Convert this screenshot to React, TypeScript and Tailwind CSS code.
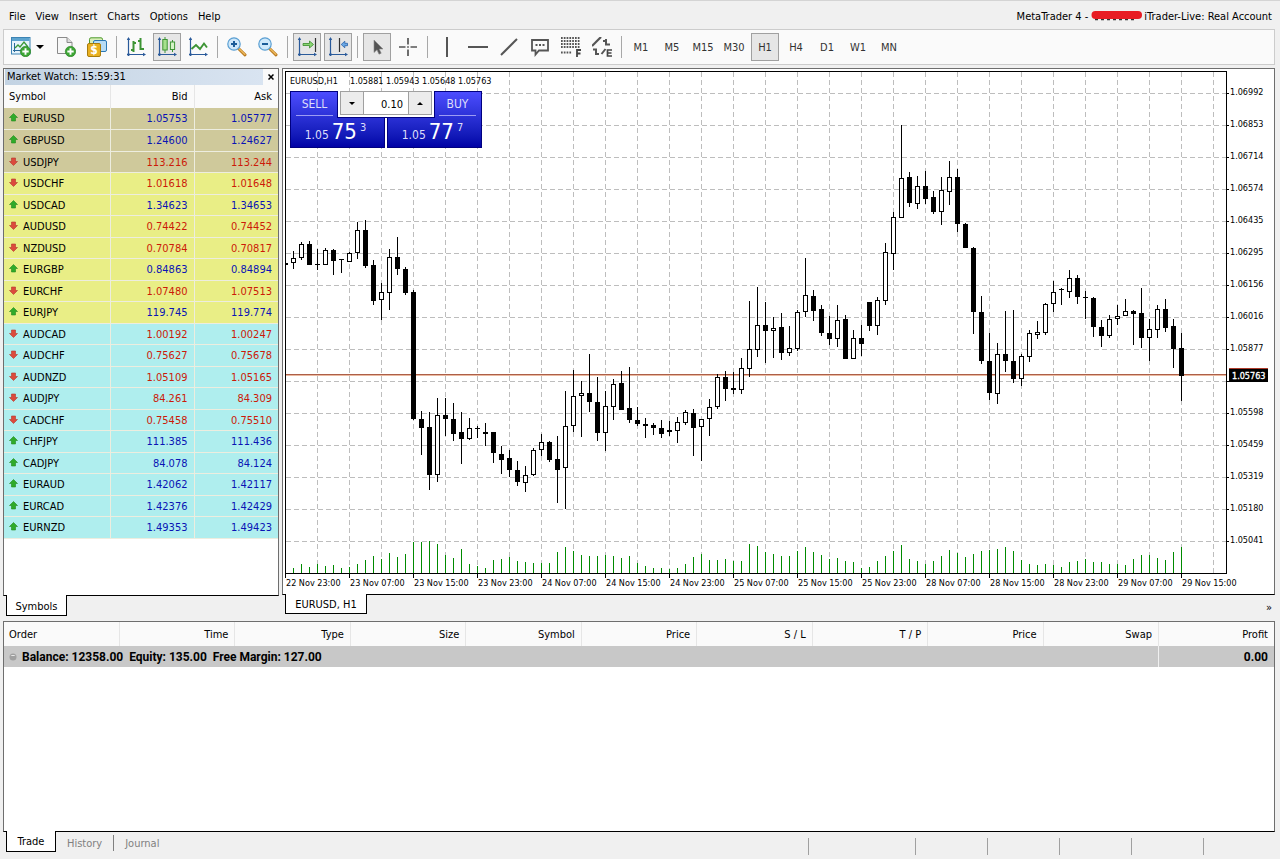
import React from "react";

const quotes: [string, boolean, string, string][] = [
  ["EURUSD", true, "1.05753", "1.05777"],
  ["GBPUSD", true, "1.24600", "1.24627"],
  ["USDJPY", false, "113.216", "113.244"],
  ["USDCHF", false, "1.01618", "1.01648"],
  ["USDCAD", true, "1.34623", "1.34653"],
  ["AUDUSD", false, "0.74422", "0.74452"],
  ["NZDUSD", false, "0.70784", "0.70817"],
  ["EURGBP", true, "0.84863", "0.84894"],
  ["EURCHF", false, "1.07480", "1.07513"],
  ["EURJPY", true, "119.745", "119.774"],
  ["AUDCAD", false, "1.00192", "1.00247"],
  ["AUDCHF", false, "0.75627", "0.75678"],
  ["AUDNZD", false, "1.05109", "1.05165"],
  ["AUDJPY", false, "84.261", "84.309"],
  ["CADCHF", false, "0.75458", "0.75510"],
  ["CHFJPY", true, "111.385", "111.436"],
  ["CADJPY", true, "84.078", "84.124"],
  ["EURAUD", true, "1.42062", "1.42117"],
  ["EURCAD", true, "1.42376", "1.42429"],
  ["EURNZD", true, "1.49353", "1.49423"],
];

// Candles: high, body top, body bottom, low, 1 = falling (filled); 8px apart.
const candles: number[][] = [
  [251, 258, 263, 269, 0], [242, 244, 258, 260, 0], [241, 244, 265, 265, 1], [249, 264, 265, 270, 1],
  [248, 250, 265, 265, 0], [249, 250, 261, 275, 1], [259, 259, 260, 273, 1], [252, 253, 262, 262, 0],
  [222, 230, 253, 259, 0], [220, 230, 266, 268, 1], [260, 265, 301, 305, 1], [283, 292, 300, 320, 0],
  [249, 257, 293, 310, 0], [237, 257, 269, 275, 1], [267, 269, 293, 295, 1], [290, 292, 419, 420, 1],
  [411, 419, 428, 455, 1], [412, 427, 475, 490, 1], [398, 415, 475, 482, 0], [398, 415, 419, 436, 1],
  [403, 419, 434, 441, 1], [412, 432, 439, 464, 1], [418, 428, 439, 440, 0], [426, 428, 429, 438, 1],
  [423, 432, 434, 446, 1], [432, 432, 453, 463, 1], [446, 454, 460, 474, 1], [450, 458, 470, 477, 1],
  [461, 470, 482, 486, 1], [466, 475, 483, 492, 0], [448, 450, 475, 476, 0], [434, 442, 450, 456, 0],
  [441, 442, 460, 462, 1], [436, 459, 470, 503, 1], [391, 426, 468, 509, 0], [370, 396, 426, 432, 0],
  [381, 393, 396, 437, 0], [354, 393, 402, 412, 1], [377, 402, 433, 441, 1], [391, 406, 433, 451, 0],
  [379, 384, 407, 420, 0], [371, 383, 410, 410, 1], [367, 408, 420, 423, 1], [407, 420, 424, 426, 1],
  [418, 424, 426, 438, 1], [423, 425, 428, 435, 1], [420, 428, 434, 438, 1], [421, 430, 432, 436, 1],
  [417, 422, 431, 443, 0], [410, 412, 423, 425, 0], [409, 413, 428, 456, 1], [419, 419, 427, 461, 0],
  [399, 407, 419, 436, 0], [374, 377, 407, 409, 0], [371, 377, 389, 401, 1], [372, 388, 390, 394, 1],
  [358, 368, 390, 394, 0], [301, 349, 369, 377, 0], [287, 325, 350, 357, 0], [302, 325, 331, 363, 1],
  [317, 328, 331, 358, 0], [313, 327, 353, 360, 1], [326, 348, 353, 356, 0], [310, 312, 349, 351, 0],
  [258, 295, 312, 317, 0], [290, 296, 311, 321, 1], [305, 309, 333, 336, 1], [316, 333, 339, 345, 1],
  [305, 320, 339, 347, 0], [315, 319, 359, 359, 1], [330, 338, 359, 359, 0], [325, 338, 344, 356, 1],
  [302, 302, 326, 331, 1], [297, 300, 326, 335, 0], [243, 252, 301, 305, 0], [212, 217, 254, 270, 0],
  [125, 178, 218, 218, 0], [172, 177, 203, 207, 1], [176, 186, 204, 209, 0], [171, 186, 199, 204, 1],
  [191, 197, 212, 214, 1], [177, 190, 212, 225, 0], [161, 177, 192, 205, 0], [169, 177, 224, 232, 1],
  [223, 224, 248, 248, 1], [247, 248, 312, 334, 1], [296, 312, 361, 364, 1], [333, 361, 393, 400, 1],
  [343, 354, 394, 404, 0], [311, 354, 361, 372, 1], [310, 361, 379, 383, 1], [354, 356, 379, 386, 0],
  [330, 333, 357, 362, 0], [321, 332, 335, 339, 0], [303, 304, 333, 335, 0], [281, 292, 304, 312, 0],
  [288, 289, 290, 305, 1], [270, 278, 292, 298, 0], [275, 278, 297, 304, 1], [291, 297, 298, 319, 1],
  [297, 298, 327, 337, 1], [320, 327, 336, 347, 1], [315, 319, 336, 338, 0], [305, 316, 319, 325, 0],
  [299, 311, 316, 316, 0], [310, 311, 314, 345, 1], [288, 313, 338, 348, 1], [319, 329, 338, 361, 0],
  [305, 309, 330, 338, 0], [299, 309, 328, 332, 1], [319, 326, 349, 368, 1], [333, 348, 376, 401, 1],
];

const volumes: number[] = [
  5, 9, 6, 9, 7, 8, 5, 6, 9, 13, 17, 14, 20, 16, 19, 31, 31, 32, 29, 18, 15, 24, 9, 7, 5, 13, 14, 16, 12, 11,
  10, 10, 10, 21, 26, 22, 18, 17, 17, 18, 17, 15, 17, 10, 7, 5, 5, 4, 5, 9, 16, 19, 13, 13, 14, 12, 12, 29, 27,
  21, 19, 17, 17, 22, 26, 21, 18, 14, 15, 12, 11, 5, 6, 12, 17, 22, 28, 14, 12, 9, 12, 17, 23, 20, 16, 19, 22,
  23, 24, 26, 22, 13, 9, 8, 9, 8, 6, 11, 12, 14, 11, 11, 9, 9, 8, 14, 18, 18, 15, 13, 21, 26,
];

const prices = [
  "1.06992", "1.06853", "1.06714", "1.06574", "1.06435", "1.06295", "1.06156", "1.06016", "1.05877", "",
  "1.05598", "1.05459", "1.05319", "1.05180", "1.05041",
];
const times = [
  "22 Nov 23:00", "23 Nov 07:00", "23 Nov 15:00", "23 Nov 23:00", "24 Nov 07:00", "24 Nov 15:00", "24 Nov 23:00",
  "25 Nov 07:00", "25 Nov 15:00", "25 Nov 23:00", "28 Nov 07:00", "28 Nov 15:00", "28 Nov 23:00", "29 Nov 07:00",
  "29 Nov 15:00",
];

function Chart() {
  return (
    <svg
      viewBox="283 69 991 525"
      className="block w-full text-[9px]"
      role="img"
      aria-label="EURUSD H1 candlestick chart"
      shapeRendering="crispEdges"
    >
      <g stroke="#bdbdbd" strokeDasharray="5 3">
        {prices.map((_, i) => (
          <line key={i} x1={286} x2={1226} y1={93.5 + i * 32} y2={93.5 + i * 32} />
        ))}
        {Array.from({ length: 29 }, (_, i) => (
          <line key={i} y1={72} y2={573} x1={317.5 + i * 32} x2={317.5 + i * 32} />
        ))}
      </g>
      <rect x={286} y={374} width={940} height={1} fill="#ad5f48" />
      <rect x={286} y={375} width={940} height={1} fill="#e9b9a0" />
      {volumes.map((v, i) => (
        <rect key={i} x={293 + i * 8} y={573 - v} width={1} height={v} fill="#008a00" />
      ))}
      <rect x={286} y={263} width={2} height={2} />
      {candles.map(([h, t, b, l, down], i) => {
        const x = 293 + i * 8;
        return (
          <g key={i}>
            <rect x={x} y={h} width={1} height={l - h} />
            <rect x={x - 2} y={t} width={5} height={b - t} />
            {!down && <rect x={x - 1} y={t + 1} width={3} height={b - t - 2} fill="#fff" />}
          </g>
        );
      })}
      <path d="M285.5 577V71.500H1226.500V573.500H285.500" fill="none" stroke="#000" />
      {prices.map((p, i) => (
        <g key={i}>
          <rect x={1226} y={93 + i * 32} width={3} height={1} />
          <text x={1230} y={95 + i * 32}>{p}</text>
        </g>
      ))}
      {times.map((t, i) => (
        <g key={t}>
          <rect x={285 + i * 64} y={573} width={1} height={5} />
          <text x={286 + i * 64} y={586}>{t}</text>
        </g>
      ))}
      <rect x={1229} y={368} width={39} height={14} />
      <rect x={1229} y={368} width={39} height={1} fill="#ad3a2a" />
      <text x={1232} y={379} fill="#fff" stroke="#fff" strokeWidth={0.3}>1.05763</text>
      <text x={290} y={84}>EURUSD,H1</text>
      {["1.05881", "1.05943", "1.05648", "1.05763"].map((p, i) => (
        <text key={p} x={350 + i * 36} y={84}>{p}</text>
      ))}
    </svg>
  );
}

function Deal({ side, big, sup }: { side: string; big: string; sup: string }) {
  const buy = side === "BUY";
  return (
    <button className="flex h-[57px] w-[95px] flex-col border border-[#000080] bg-linear-to-b from-[#4c4cff] to-[#0202a6] text-[#dedefa]">
      <span className={buy ? "ml-auto w-[47px] px-[5px]" : "w-[47px] px-[5px]"}>
        <span className="block h-6 border-b border-[#9c9cf4] text-center text-[12px] leading-6">{side}</span>
      </span>
      <span className="mt-1 flex w-full items-baseline justify-center gap-[3px] pr-1">
        <span className="text-[12px] leading-6">1.05</span>
        <span className="text-[22px] leading-6 text-white">{big}</span>
        <span className="self-start text-[11px] leading-4">{sup}</span>
      </span>
    </button>
  );
}

function OneClick() {
  return (
    <div className="absolute top-[22px] left-[7px] flex gap-[2px] bg-white">
      <Deal side="SELL" big="75" sup="3" />
      <Deal side="BUY" big="77" sup="7" />
      <div className="absolute top-0 left-[47px] flex h-[27px] w-[98px] border-x border-b border-[#000080] bg-white px-[2px] pb-[2px]">
        <button aria-label="Decrease volume" className="flex w-6 items-center justify-center border border-[#a0a0a0] bg-[#ececec]">
          <svg width="6" height="3"><path d="M0 0h6L3 3z" /></svg>
        </button>
        <input aria-label="Volume" defaultValue="0.10" className="min-w-0 flex-1 border-y border-[#a0a0a0] bg-white pt-[3px] pr-[5px] text-right text-[11px] outline-none" />
        <button aria-label="Increase volume" className="flex w-6 items-center justify-center border border-[#a0a0a0] bg-[#ececec]">
          <svg width="6" height="3"><path d="M0 3h6L3 0z" /></svg>
        </button>
      </div>
    </div>
  );
}

function Arrow({ up }: { up: boolean }) {
  return up ? (
    <svg width="9" height="9" viewBox="0 0 9 9" className="mb-[3px]"><path d="M4.500 .5L8.500 4.500H6.500V8H2.500V4.500H.5z" fill="#2fab2a" stroke="#228a1c" strokeWidth=".6" /></svg>
  ) : (
    <svg width="9" height="9" viewBox="0 0 9 9" className="mb-[3px]"><path d="M4.500 8.500L.5 4.500H2.500V1H6.500V4.500H8.500z" fill="#dc4a3c" stroke="#b5362b" strokeWidth=".6" /></svg>
  );
}

function Tool({ label, on, children }: { label: string; on?: boolean; children: React.ReactNode }) {
  return (
    <button
      aria-label={label}
      aria-pressed={on}
      className={
        on
          ? "flex h-7 w-7 shrink-0 items-center justify-center border border-[#a0a0a0] bg-[#e6e6e6] text-[11px] text-[#333]"
          : "flex h-7 w-7 shrink-0 items-center justify-center text-[11px] text-[#333]"
      }
    >
      {children}
    </button>
  );
}

const Ico = ({ children }: { children: React.ReactNode }) => (
  <svg width="20" height="20" viewBox="0 0 20 20" fill="none" className="shrink-0">{children}</svg>
);

const Sep = () => <span className="mx-[2px] h-[22px] w-px shrink-0 bg-[#a8a8a8]" />;

const Axes = () => (
  <>
    <path d="M2.500 1V19M1 17.500H19" stroke="#2a5a9a" strokeWidth="1.200" />
    <path d="M.8 3L2.500 0l1.700 3zM17 15.800l3 1.700-3 1.700z" fill="#2a5a9a" />
    <circle cx="2.500" cy="17.500" r="1.300" fill="#2a5a9a" />
  </>
);

const Plus = () => (
  <>
    <circle cx="14.500" cy="14.500" r="5.200" fill="#3da535" stroke="#23801f" strokeWidth=".6" />
    <path d="M14.500 11.300v6.400M11.300 14.500h6.400" stroke="#fff" strokeWidth="1.900" />
  </>
);

const Lens = ({ plus }: { plus?: boolean }) => (
  <Ico>
    <path d="M11.500 11.500L18 17.800" stroke="#b9791f" strokeWidth="3" strokeLinecap="round" />
    <path d="M12 11.800L17.800 17.300" stroke="#ecb85a" strokeWidth="1.500" strokeLinecap="round" />
    <circle cx="7" cy="7" r="6.200" fill="#cfe8fa" stroke="#5a9fd2" strokeWidth="1.200" />
    <path d={plus ? "M7 4v6M4 7h6" : "M4 7h6"} stroke="#1b5c98" strokeWidth="2" />
  </Ico>
);

function Toolbar() {
  return (
    <div role="toolbar" className="mx-[3px] flex h-9 items-center gap-[3px] border border-[#ccc] bg-[#fafafa] pl-[3px]">
      <div className="flex">
        <Tool label="New chart">
          <Ico>
            <rect x=".5" y=".5" width="18.500" height="16.500" fill="#e6f4fc" stroke="#3d84b4" />
            <rect x="1" y="1" width="17.500" height="3" fill="#5da4cf" />
            <path d="M3.500 6v9M2 13.500h8" stroke="#2a6a9a" />
            <path d="M4 11l3-3 2 2 4-5 4 5" stroke="#3c9a38" strokeWidth="1.300" />
            <Plus />
          </Ico>
        </Tool>
        <button aria-label="Chart list" className="flex w-[14px] items-center justify-center pr-1">
          <svg width="8" height="4" className="shrink-0"><path d="M0 0h8L4 4z" /></svg>
        </button>
      </div>
      <Tool label="New profile">
        <Ico>
          <path d="M1.500 .5H11l5 5V16.500H1.500z" fill="#f7f7f7" stroke="#8a8a8a" />
          <path d="M11 .5v5h5" fill="#dcdcdc" stroke="#8a8a8a" />
          <Plus />
        </Ico>
      </Tool>
      <Tool label="New order">
        <Ico>
          <rect x="2.500" y=".8" width="13" height="11" rx="1.500" fill="#d8efb8" stroke="#4f9a2e" />
          <rect x="6.500" y="3.500" width="13" height="11" rx="1.500" fill="#b7dcf5" stroke="#2a78b4" />
          <rect x=".5" y="6.500" width="13" height="13" rx="1.500" fill="#e9b020" stroke="#a87c0c" />
          <text x="7" y="17.300" fontSize="12" fontWeight="bold" fill="#fff" textAnchor="middle">$</text>
        </Ico>
      </Tool>
      <Sep />
      <Tool label="Bar chart">
        <Ico><Axes /><path d="M7.500 4v11M5 13h2.500M7.500 6H10M14.500 1v12M12 4h2.500M14.500 12H18" stroke="#3d9434" strokeWidth="2" /></Ico>
      </Tool>
      <Tool label="Candlesticks" on>
        <Ico><Axes /><path d="M8 0v16M15.500 3v12" stroke="#3d9434" /><rect x="5.800" y="2.500" width="4.400" height="10.500" fill="#a6e08e" stroke="#3d9434" /><rect x="13.400" y="5" width="4.200" height="7.500" fill="#d4f3c6" stroke="#3d9434" /></Ico>
      </Tool>
      <Tool label="Line chart">
        <Ico><Axes /><path d="M3.500 12l4.500-4 4 4 4-5.500L19 10.500" stroke="#3d9434" strokeWidth="1.900" /></Ico>
      </Tool>
      <Sep />
      <Tool label="Zoom in"><Lens plus /></Tool>
      <Tool label="Zoom out"><Lens /></Tool>
      <Sep />
      <Tool label="Auto scroll" on>
        <Ico><Axes /><path d="M18.500 1v14" stroke="#333" strokeWidth="1.200" /><path d="M6 6.500h6.500V4l4 3.500-4 3.500V8.500H6z" fill="#8ad672" stroke="#3a8a2c" strokeWidth=".8" /></Ico>
      </Tool>
      <Tool label="Chart shift" on>
        <Ico><Axes /><path d="M11.500 1v14" stroke="#333" strokeWidth="1.200" /><path d="M19.500 6.300h-2.700V4.200l-3.600 3.300 3.600 3.300V8.700h2.700z" fill="#6aa8e6" stroke="#2a62a8" strokeWidth=".8" /></Ico>
      </Tool>
      <Sep />
      <Tool label="Cursor" on>
        <Ico><path d="M7 3v12.500l3-2.700 2 4.400 2.200-1-2-4.200h3.800z" fill="#555" stroke="#8a8a8a" strokeWidth=".6" /></Ico>
      </Tool>
      <Tool label="Crosshair">
        <Ico><path d="M10 1v6.500M10 12.500V19M1 10h6.500M12.500 10H19" stroke="#555" strokeWidth="1.700" /><rect x="9.200" y="9.200" width="1.600" height="1.600" fill="#555" /></Ico>
      </Tool>
      <Sep />
      <Tool label="Vertical line"><Ico><path d="M10 0v20" stroke="#555" strokeWidth="2" /></Ico></Tool>
      <Tool label="Horizontal line"><Ico><path d="M0 10h20" stroke="#555" strokeWidth="2" /></Ico></Tool>
      <Tool label="Trend line"><Ico><path d="M2 18L18 2" stroke="#555" strokeWidth="2" /></Ico></Tool>
      <Tool label="Text label">
        <Ico><path d="M2 3h16v10.500H9l-3.500 4v-4H2z" stroke="#555" strokeWidth="1.800" /><path d="M5.500 7h2v2h-2zM9 7h2v2H9zM12.500 7h2v2h-2z" fill="#555" /></Ico>
      </Tool>
      <Tool label="Fibonacci retracement">
        <Ico>
          <path d="M0 1h19M0 4h19M0 7h19M0 10h19M0 15.500h11" stroke="#555" strokeWidth="1.800" strokeDasharray="1.700 1.100" />
          <path d="M16 20v-7h4M16 16.500h3.500" stroke="#444" strokeWidth="1.800" />
        </Ico>
      </Tool>
      <Tool label="Equidistant channel">
        <Ico>
          <path d="M0 9L9 0" stroke="#555" strokeWidth="2.200" />
          <path d="M4 11.500V18M4 12.500H1M4 17h3M14 2v6.500M14 4h-3M14 7.500h4M9.500 17l4-5" stroke="#555" strokeWidth="2" />
          <path d="M20 13h-4.500v6H20M15.500 16H19.500" stroke="#444" strokeWidth="1.700" />
        </Ico>
      </Tool>
      <Sep />
      {["M1", "M5", "M15", "M30", "H1", "H4", "D1", "W1", "MN"].map((p) => (
        <Tool key={p} label={p} on={p === "H1"}><span className="pt-px">{p}</span></Tool>
      ))}
    </div>
  );
}

const columns = ["Order", "Time", "Type", "Size", "Symbol", "Price", "S / L", "T / P", "Price", "Swap", "Profit"];

export default function App() {
  return (
    <div className="flex min-h-screen flex-col border-t border-[#d4d4d4] bg-[#f0f0f0] pr-[2px] font-['DejaVu_Sans_Condensed','DejaVu_Sans',sans-serif] text-[11px] leading-4 text-black">
      <header className="flex h-7 items-center justify-between pt-1 pr-[6px] pl-[9px]">
        <nav className="flex gap-[10px]">
          {["File", "View", "Insert", "Charts", "Options", "Help"].map((m) => (
            <button key={m}>{m}</button>
          ))}
        </nav>
        <div className="flex items-center">
          <span>MetaTrader 4 -</span>
          <svg width="53" height="12" className="mb-[2px] ml-[3px]" aria-hidden="true">
            <path d="M4 9.500h40" stroke="#333" strokeWidth="1.600" strokeDasharray="3 3" />
            <path d="M4.500 5H47" stroke="#e81c24" strokeWidth="8" strokeLinecap="round" />
          </svg>
          <span>iTrader-Live: Real Account</span>
        </div>
      </header>
      <Toolbar />

      <div className="mt-[3px] mr-[3px] ml-[3px] flex gap-[3px]">
        <section className="flex w-[276px] shrink-0 flex-col">
          <div className="flex flex-1 flex-col border border-b-black border-[#6e6e6e] bg-white">
            <div className="flex h-4 items-center bg-[#fafafa]">
              <h2 className="ml-px flex-1 bg-linear-to-r from-[#c3d3e3] to-[#d9e4f1] pl-[2px] leading-4">Market Watch: 15:59:31</h2>
              <button aria-label="Close" className="flex w-[15px] justify-center">
                <svg width="6" height="6"><path d="M.5 .5l5 5M5.500 .5l-5 5" stroke="#000" strokeWidth="1.500" /></svg>
              </button>
            </div>
            <table className="w-full table-fixed border-collapse">
              <colgroup><col className="w-[106px]" /><col className="w-[84px]" /><col /></colgroup>
              <thead>
                <tr className="h-[23px] bg-[#fafafa]">
                  <th className="border-r border-[#e6e6e6] p-0 pl-[5px] text-left font-normal">Symbol</th>
                  <th className="border-r border-[#e6e6e6] p-0 pr-[6px] text-right font-normal">Bid</th>
                  <th className="p-0 pr-[6px] text-right font-normal">Ask</th>
                </tr>
              </thead>
              <tbody>
                {quotes.map(([s, up, bid, ask], i) => (
                  <tr
                    key={s}
                    className={`${i % 2 ? "h-[22px]" : "h-[21px]"} ${i < 3 ? "bg-[#cfc99b]" : i < 10 ? "bg-[#e9ee86]" : "bg-[#afeeee]"}`}
                  >
                    <td className="border-r border-b border-[#ededdf] p-0 pt-[2px] pl-[5px]">
                      <span className="flex items-center gap-[5px]"><Arrow up={up} />{s}</span>
                    </td>
                    <td className={`border-r border-b border-[#ededdf] p-0 pt-[2px] pr-[6px] text-right ${up ? "text-[#0a14b4]" : "text-[#cc1a08]"}`}>{bid}</td>
                    <td className={`border-b border-[#ededdf] p-0 pt-[2px] pr-[6px] text-right ${up ? "text-[#0a14b4]" : "text-[#cc1a08]"}`}>{ask}</td>
                  </tr>
                ))}
              </tbody>
            </table>
          </div>
          <div className="flex pl-[3px]">
            <button className="-mt-px h-[21px] w-[61px] border border-t-0 border-black bg-white pt-[3px]">Symbols</button>
          </div>
        </section>

        <section className="min-w-0 flex-1">
          <div className="relative border border-[#6e6e6e] border-b-black bg-white">
            <Chart />
            <OneClick />
          </div>
          <div className="flex items-start justify-between pl-[3px]">
            <button className="relative -mt-px h-5 w-[82px] border border-t-0 border-black bg-white pt-[3px]">EURUSD, H1</button>
            <button aria-label="More tabs" className="pt-[5px] pr-[3px]">»</button>
          </div>
        </section>
      </div>

      <section className="mx-[3px] mt-[5px] flex flex-1 flex-col">
        <div className="flex-1 border border-[#6e6e6e] border-b-black bg-white">
          <table className="w-full table-fixed border-collapse">
            <thead>
              <tr className="h-6 bg-[#fafafa]">
                {columns.map((c, i) => (
                  <th
                    key={i}
                    className={
                      i === 0
                        ? "border-r border-[#e6e6e6] p-0 pt-[2px] pl-[5px] text-left font-normal"
                        : "border-r border-[#e6e6e6] p-0 pt-[2px] pr-[6px] text-right font-normal last:border-r-0"
                    }
                  >
                    {c}
                  </th>
                ))}
              </tr>
            </thead>
            <tbody>
              <tr className="h-[21px] bg-[#c8c8c8] font-['Roboto','DejaVu_Sans',sans-serif] text-[12px] font-bold">
                <td colSpan={10} className="border-r border-[#f0f0f0] p-0 pl-[5px]">
                  <span className="flex items-center gap-[5px]">
                    <svg width="8" height="8"><circle cx="4" cy="4" r="3.500" fill="#a0a0a0" /><path d="M1.500 3a3 2.500 0 0 1 5 0z" fill="#eee" /></svg>
                    <span className="whitespace-pre">{"Balance: 12358.00  Equity: 135.00  Free Margin: 127.00"}</span>
                  </span>
                </td>
                <td className="p-0 pr-[6px] text-right">0.00</td>
              </tr>
            </tbody>
          </table>
        </div>
        <footer className="flex h-[27px] items-start justify-between">
          <div className="flex pl-[3px] text-[#808080]">
            <button className="-mt-px h-[21px] w-[50px] border border-t-0 border-black bg-white pt-[2px] text-black">Trade</button>
            <button className="mt-[3px] px-[11px]">History</button>
            <span className="mt-[3px] h-4 w-px bg-[#808080]" />
            <button className="mt-[3px] px-[11px]">Journal</button>
          </div>
          <div className="mt-[6px] flex h-[17px]">
            <span className="w-[107px] border-l border-[#a0a0a0]" />
            {[0, 1, 2, 3, 4].map((n) => (
              <span key={n} className="w-[72px] border-l border-[#a0a0a0]" />
            ))}
          </div>
        </footer>
      </section>
    </div>
  );
}
